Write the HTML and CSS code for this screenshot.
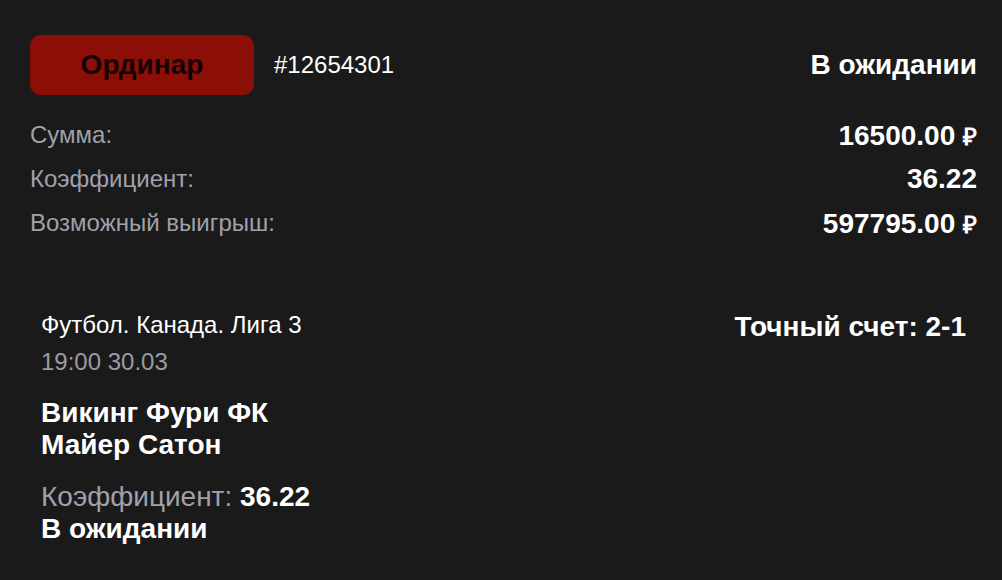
FILE: index.html
```html
<!DOCTYPE html>
<html lang="ru">
<head>
<meta charset="utf-8">
<link rel="stylesheet" href="styles.css">
</head>
<body>
<div class="bet">
  <div class="bet-head">
    <div class="head-left">
      <span class="badge">Ординар</span>
      <span class="bet-id">#12654301</span>
    </div>
    <span class="status">В ожидании</span>
  </div>
  <div class="rows">
    <div class="row"><span class="label">Сумма:</span><span class="value">16500.00 <span class="rub">₽</span></span></div>
    <div class="row"><span class="label">Коэффициент:</span><span class="value">36.22</span></div>
    <div class="row"><span class="label">Возможный выигрыш:</span><span class="value">597795.00 <span class="rub">₽</span></span></div>
  </div>
  <div class="event">
    <div class="event-left">
      <div class="league">Футбол. Канада. Лига 3</div>
      <div class="date">19:00 30.03</div>
      <div class="teams">
        <div>Викинг Фури ФК</div>
        <div>Майер Сатон</div>
      </div>
      <div class="coef"><span class="label">Коэффициент:</span> <b>36.22</b></div>
      <div class="ev-status">В ожидании</div>
    </div>
    <div class="outcome">Точный счет: 2-1</div>
  </div>
</div>
</body>
</html>
```
FILE: styles.css
```css
html, body {
  margin: 0;
  padding: 0;
  background: #1a1a1a;
}
body {
  font-family: "Liberation Sans", Arial, sans-serif;
  color: #ffffff;
  width: 1002px;
  height: 580px;
  overflow: hidden;
}
.bet {
  padding: 35px 25px 0 30px;
}
.bet-head {
  display: flex;
  justify-content: space-between;
  align-items: center;
  height: 60px;
}
.head-left {
  display: flex;
  align-items: center;
  gap: 20px;
}
.badge {
  display: flex;
  align-items: center;
  justify-content: center;
  width: 224px;
  height: 60px;
  background: #8b0f07;
  border-radius: 11px;
  color: #140202;
  font-weight: 700;
  font-size: 28px;
}
.bet-id {
  font-size: 24px;
}
.status {
  font-weight: 700;
  font-size: 28px;
}
.rows {
  margin-top: 18px;
}
.row {
  display: flex;
  justify-content: space-between;
  align-items: center;
  height: 44px;
}
.label {
  color: #a0a1ab;
  font-size: 24px;
}
.value {
  font-weight: 700;
  font-size: 28px;
}
.rub {
  font-size: 24px;
}
.event {
  display: flex;
  justify-content: space-between;
  align-items: flex-start;
  margin-top: 65px;
  padding: 0 11px;
}
.league {
  font-size: 24px;
  line-height: 30px;
}
.date {
  margin-top: 7px;
  color: #9a9ba5;
  font-size: 24px;
  line-height: 30px;
}
.teams {
  margin-top: 20px;
  font-weight: 700;
  font-size: 28px;
  line-height: 32px;
}
.coef {
  margin-top: 20px;
  font-size: 28px;
  line-height: 32px;
}
.coef .label {
  font-size: 28px;
}
.coef b {
  font-weight: 700;
}
.ev-status {
  font-weight: 700;
  font-size: 28px;
  line-height: 32px;
}
.outcome {
  font-weight: 700;
  font-size: 28px;
  line-height: 34px;
}
```
